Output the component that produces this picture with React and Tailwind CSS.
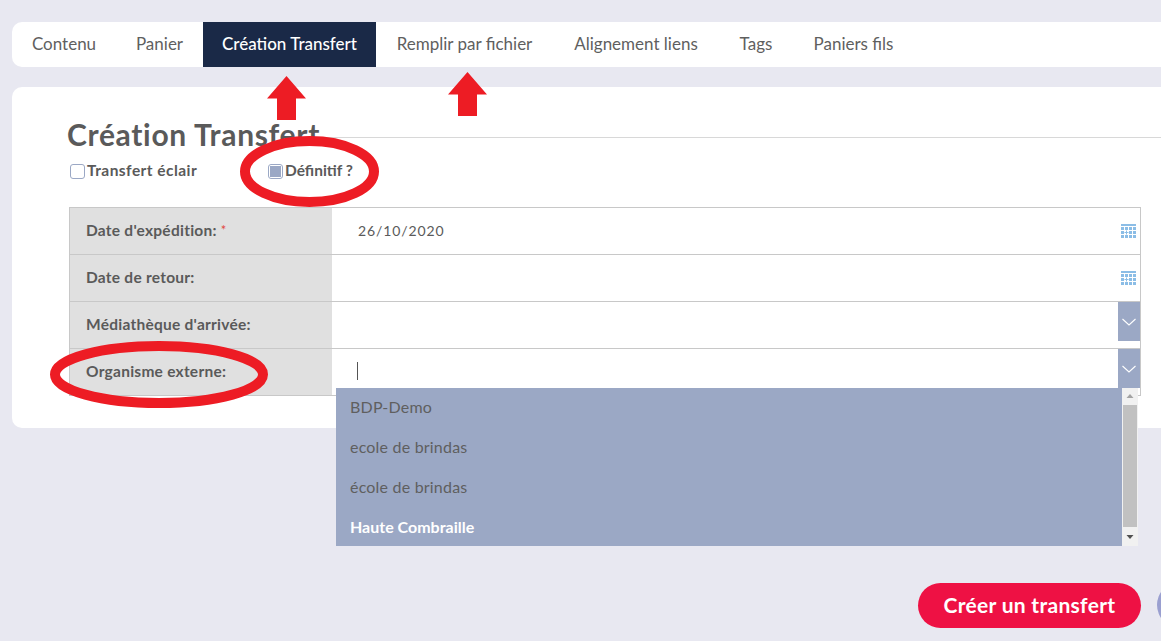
import React from "react";

const font = { fontFamily: '"Lato", "Open Sans", sans-serif' };

function CalendarIcon() {
  const cells = [];
  for (let r = 0; r < 3; r++) {
    for (let c = 0; c < 4; c++) {
      cells.push(<rect key={r + "-" + c} x={c * 4} y={3 + r * 4} width="3" height="3" fill="#8bbde6" />);
    }
  }
  return (
    <svg width="15" height="14" viewBox="0 0 15 14" className="block">
      <rect x="0" y="0" width="15" height="2" fill="#8bbde6" />
      {cells}
      <rect x="4" y="7" width="3" height="3" fill="#fff" />
      <rect x="5" y="6.5" width="1" height="4" fill="#8bbde6" />
      <rect x="3.5" y="8" width="4" height="1" fill="#8bbde6" />
    </svg>
  );
}

function SelectButton() {
  return (
    <div className="flex h-[39px] w-[22px] items-center justify-center bg-[#9ba8c5]">
      <svg width="14" height="8" viewBox="0 0 14 8">
        <path d="M0.5 1l6.5 6 6.5-6" fill="none" stroke="#fff" strokeWidth="1.1" />
      </svg>
    </div>
  );
}

function Row({ label, required, children, right, last }) {
  return (
    <div className={last ? "flex h-[46px]" : "flex h-[47px] border-b border-[#c8c8c8]"}>
      <div className="flex w-[262px] shrink-0 items-center whitespace-nowrap bg-[#e0e0e0] pb-px pl-4 text-[15.5px] font-bold tracking-[0.25px] text-[#5a5a5a]">
        {label}
        {required && <span className="ml-1 text-[13px] font-normal text-[#e0483e]">*</span>}
      </div>
      <div className="flex min-w-0 flex-1 items-start justify-between">
        <div className="pl-[26px] pt-[14px] text-[14px] leading-[18px] tracking-[0.9px] text-[#5a5a5a]">{children}</div>
        {right}
      </div>
    </div>
  );
}

function Tab({ children, active, w }) {
  return (
    <div
      className={
        "flex h-full items-center justify-center whitespace-nowrap pb-[2px] text-[17px] " +
        (active ? "bg-[#1a2947] font-medium text-white" : "text-[#5f5f5f]")
      }
      style={{ width: w }}
    >
      {children}
    </div>
  );
}

function Arrow({ className }) {
  return (
    <svg width="39" height="44" viewBox="0 0 39 44" className={"absolute " + className}>
      <path d="M19.5 0L39 22.5H29V44H10V22.5H0Z" fill="#ed1c24" />
    </svg>
  );
}

export default function App() {
  return (
    <div className="relative h-[641px] w-[1161px] overflow-hidden bg-[#e8e8f1] pt-[22px] pl-3" style={font}>
      <div className="flex h-[45px] w-[1180px] rounded-l-[10px] bg-white">
        <Tab w="104px">Contenu</Tab>
        <Tab w="87px">Panier</Tab>
        <Tab w="173px" active>Création Transfert</Tab>
        <Tab w="177px">Remplir par fichier</Tab>
        <Tab w="166px">Alignement liens</Tab>
        <Tab w="74px">Tags</Tab>
        <Tab w="121px">Paniers fils</Tab>
      </div>

      <div className="mt-5 h-[341px] w-[1180px] rounded-l-[10px] bg-white pt-[30px] pl-[55px]">
        <div className="flex w-[1094px] items-center">
          <h1 className="whitespace-nowrap text-[30px] leading-[34px] font-bold tracking-[0.67px] text-[#5a5a5a]">Création Transfert</h1>
          <div className="mt-[6px] h-px flex-1 bg-[#d8d8d8]" />
        </div>
        <div className="mt-[10px] flex h-[20px] items-center pl-[3px] text-[15.5px] font-bold text-[#5a5a5a]">
          <span className="h-[15px] w-[15px] rounded-[3px] border border-[#9ba8c5] bg-white" />
          <span className="ml-[2px] w-[181px] tracking-[0.45px]">Transfert éclair</span>
          <span className="flex h-[15px] w-[15px] items-center justify-center rounded-[3px] border border-[#9ba8c5] bg-white">
            <span className="h-[11px] w-[11px] bg-[#9ba8c5]" />
          </span>
          <span className="ml-[2px]">Définitif ?</span>
        </div>

        <div className="mt-[26px] ml-[2px] w-[1072px] border border-[#c8c8c8]">
          <Row label="Date d'expédition:" required right={<div className="pr-1 pt-4"><CalendarIcon /></div>}>
            26/10/2020
          </Row>
          <Row label="Date de retour:" right={<div className="pr-1 pt-4"><CalendarIcon /></div>} />
          <Row label="Médiathèque d'arrivée:" right={<SelectButton />} />
          <Row label="Organisme externe:" last right={<SelectButton />}>
            <span className="-mt-px -ml-px block h-[18px] w-px bg-[#555]" />
          </Row>
        </div>
      </div>

      {/* open dropdown list */}
      <div className="absolute top-[388px] left-[336px] flex h-[158px] w-[802px]">
        <div className="flex-1 overflow-hidden bg-[#9ba8c5] text-[16px]">
          <div className="flex h-10 items-center pb-[2px] pl-[14px] tracking-[0.2px] text-[#5f5f5f]">BDP-Demo</div>
          <div className="flex h-10 items-center pb-[2px] pl-[14px] tracking-[0.2px] text-[#5f5f5f]">ecole de brindas</div>
          <div className="flex h-10 items-center pb-[2px] pl-[14px] tracking-[0.2px] text-[#5f5f5f]">école de brindas</div>
          <div className="flex h-10 items-center pb-[2px] pl-[14px] font-bold text-white">Haute Combraille</div>
        </div>
        <div className="flex w-4 flex-col items-center bg-[#f1f1f1]">
          <svg width="8" height="17" viewBox="0 0 8 17" className="shrink-0">
            <path d="M4 6l3.5 4h-7z" fill="#a3a3a3" />
          </svg>
          <div className="h-[122px] w-[14px] bg-[#c1c1c1]" />
          <svg width="8" height="19" viewBox="0 0 8 19" className="shrink-0">
            <path d="M0.5 8h7L4 12z" fill="#505050" />
          </svg>
        </div>
      </div>

      <button className="absolute top-[583px] left-[918px] h-[45px] w-[223px] rounded-full bg-[#ee1144] pb-[2px] text-[21px] font-bold tracking-[0.3px] text-white">
        Créer un transfert
      </button>
      <div className="absolute top-[582px] left-[1157px] h-[46px] w-[46px] rounded-full bg-[#9a9fd0]" />

      {/* hand-drawn annotations */}
      <Arrow className="top-[76px] left-[267px]" />
      <Arrow className="top-[72px] left-[448px]" />
      <svg width="160" height="80" viewBox="0 0 160 80" className="absolute top-[131px] left-[230px]">
        <ellipse cx="79.5" cy="40.5" rx="64.5" ry="30.5" fill="none" stroke="#ed1c24" strokeWidth="10" />
      </svg>
      <svg width="240" height="80" viewBox="0 0 240 80" className="absolute top-[335px] left-[39px]">
        <ellipse cx="120" cy="39.5" rx="104" ry="28.5" fill="none" stroke="#ed1c24" strokeWidth="10" />
      </svg>
    </div>
  );
}
